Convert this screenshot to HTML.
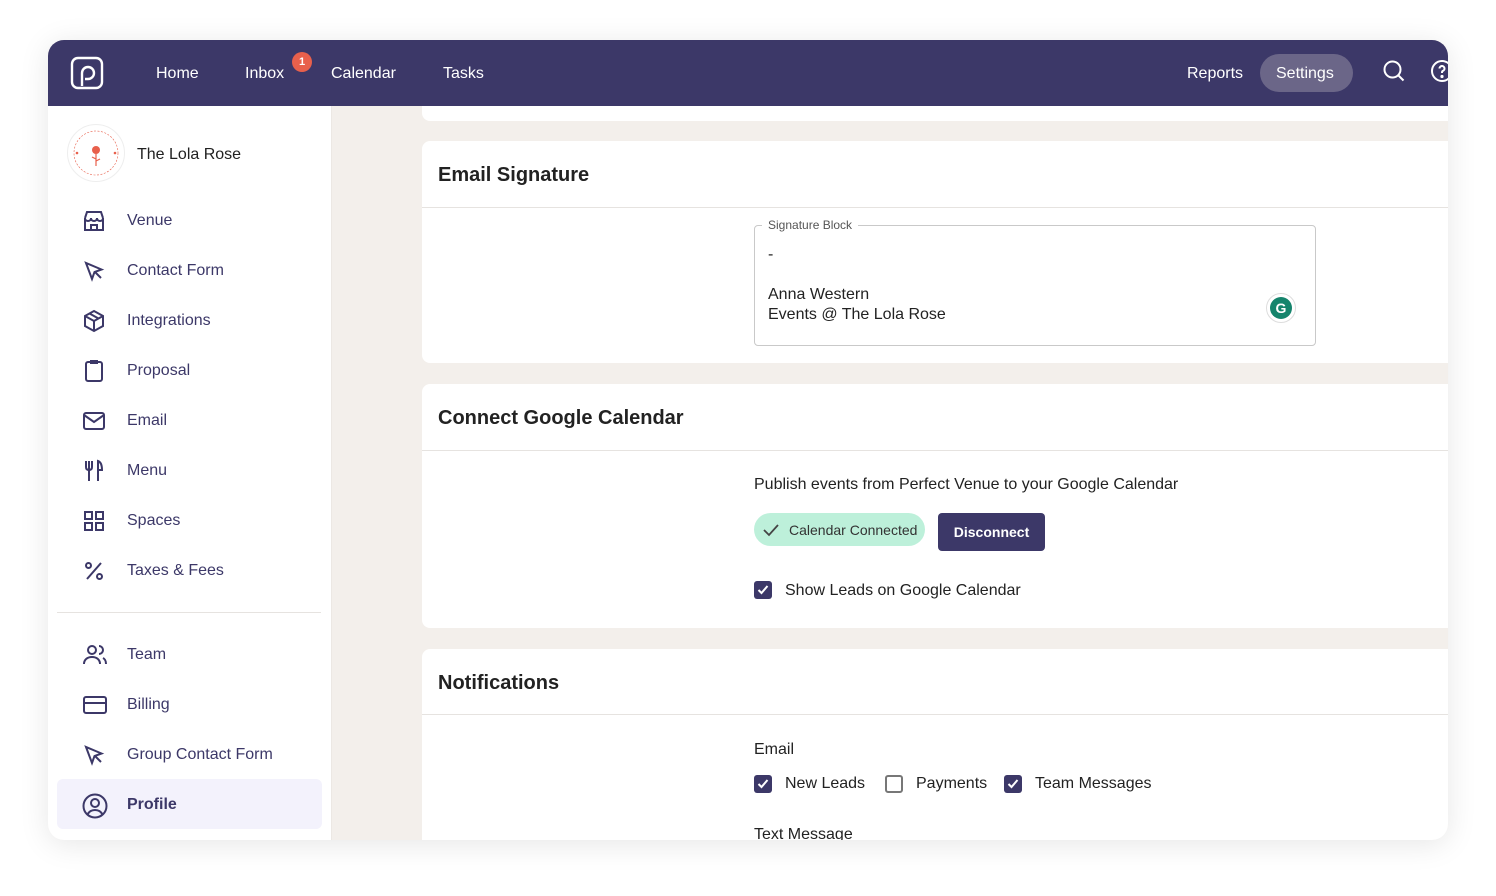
<!DOCTYPE html>
<html><head><meta charset="utf-8"><style>
*{margin:0;padding:0;box-sizing:border-box}
body{width:1496px;height:896px;background:#fff;font-family:"Liberation Sans",sans-serif;position:relative;overflow:hidden}
.frame{position:absolute;left:48px;top:40px;width:1400px;height:800px;border-radius:16px;overflow:hidden;background:#f3efeb;box-shadow:0 4px 30px rgba(0,0,0,.10)}
.nav{position:absolute;left:0;top:0;width:1400px;height:66px;background:#3c3868;color:#fff;font-size:16px;z-index:5}
.nav span{position:absolute;top:25px}
.side{position:absolute;left:0;top:66px;width:284px;height:734px;background:#fff;border-right:1px solid #ece8e4}
.item{position:absolute;left:0;width:284px;height:50px;color:#3c3868;font-size:16px}
.item svg{position:absolute;left:34px;top:14px}
.item span{position:absolute;left:79px;top:17px}
.card{position:absolute;left:374px;width:1100px;background:#fff;border-radius:8px}
.card h2{position:absolute;left:16px;top:23px;font-size:20px;color:#222;font-weight:bold}
.card .ln{position:absolute;left:0;right:0;height:1px;background:#e6e3e0}
.t{position:absolute;color:#222;font-size:16px}
.cb{position:absolute;width:18px;height:18px;border-radius:3px;background:#3c3868}
.cb.off{background:#fff;border:2px solid #777}
</style></head><body>
<div class="frame">
 <div class="nav">
  <svg style="position:absolute;left:22px;top:16px" width="34" height="34" viewBox="0 0 34 34" fill="none" stroke="#fff" stroke-width="2.4"><rect x="2" y="2" width="30" height="30" rx="6"/><path d="M12 30V17a6 6 0 1 1 6 6h-3"/></svg>
  <span style="left:108px">Home</span>
  <span style="left:197px">Inbox</span>
  <div style="position:absolute;left:244px;top:12px;width:20px;height:20px;border-radius:50%;background:#e8604c;font-size:11px;text-align:center;line-height:20px;font-weight:bold">1</div>
  <span style="left:283px">Calendar</span>
  <span style="left:395px">Tasks</span>
  <span style="left:1139px">Reports</span>
  <div style="position:absolute;left:1212px;top:14px;width:93px;height:38px;border-radius:19px;background:#6b6688"></div>
  <span style="left:1228px">Settings</span>
  <svg style="position:absolute;left:1334px;top:19px" width="24" height="24" viewBox="0 0 24 24" fill="none" stroke="#fff" stroke-width="2"><circle cx="10.5" cy="10.5" r="8"/><path d="M16.5 16.5l5 5"/></svg>
  <svg style="position:absolute;left:1382px;top:19px" width="24" height="24" viewBox="0 0 24 24" fill="none" stroke="#fff" stroke-width="2"><circle cx="12" cy="12" r="10"/><path d="M9.5 9.5a2.5 2.5 0 1 1 3.5 2.3c-.7.3-1 .9-1 1.7v.5"/><circle cx="12" cy="17.5" r=".6" fill="#fff"/></svg>
 </div>
 <div class="side">
  <div style="position:absolute;left:19px;top:18px;width:58px;height:58px;border-radius:50%;border:1px solid #eee;background:#fff"></div>
  <svg style="position:absolute;left:20px;top:19px" width="56" height="56" viewBox="0 0 56 56"><circle cx="28" cy="28" r="22" fill="none" stroke="#e8604c" stroke-width="0.6" stroke-dasharray="2 1.5"/><circle cx="28" cy="25" r="4" fill="#e8604c"/><path d="M28 29v12M28 34l-4-2M28 36l4-2" stroke="#e8604c" stroke-width="1.2"/><circle cx="9" cy="28" r="1.3" fill="#e8604c"/><circle cx="47" cy="28" r="1.3" fill="#e8604c"/></svg>
  <div style="position:absolute;left:89px;top:40px;font-size:16px;color:#222">The Lola Rose</div>

  <div class="item" style="top:89px"><svg width="24" height="24" viewBox="0 0 24 24" fill="none" stroke="#3c3868" stroke-width="2"><path d="M3 9l2-6h14l2 6M3 9v12h18V9M3 9c0 2 1.5 3 3 3s3-1 3-3c0 2 1.5 3 3 3s3-1 3-3c0 2 1.5 3 3 3s3-1 3-3M9 21v-5h6v5"/></svg><span>Venue</span></div>
  <div class="item" style="top:139px"><svg width="24" height="24" viewBox="0 0 24 24" fill="none" stroke="#3c3868" stroke-width="2"><path d="M4 4l6 16 2.5-7 7-2.5zM13 13l6 6"/></svg><span>Contact Form</span></div>
  <div class="item" style="top:189px"><svg width="24" height="24" viewBox="0 0 24 24" fill="none" stroke="#3c3868" stroke-width="2"><path d="M12 2l9 5v10l-9 5-9-5V7zM3 7l9 5 9-5M12 12v10M7.5 4.5l9 5"/></svg><span>Integrations</span></div>
  <div class="item" style="top:239px"><svg width="24" height="24" viewBox="0 0 24 24" fill="none" stroke="#3c3868" stroke-width="2"><rect x="4" y="3" width="16" height="19" rx="2"/><path d="M9 3V2h6v2H9z"/></svg><span>Proposal</span></div>
  <div class="item" style="top:289px"><svg width="24" height="24" viewBox="0 0 24 24" fill="none" stroke="#3c3868" stroke-width="2"><rect x="2" y="4" width="20" height="16" rx="2"/><path d="M2 6l10 7 10-7"/></svg><span>Email</span></div>
  <div class="item" style="top:339px"><svg width="24" height="24" viewBox="0 0 24 24" fill="none" stroke="#3c3868" stroke-width="2"><path d="M4 2v6c0 2 1 3 3 3s3-1 3-3V2M7 2v20M16 22V2c3 1 4 5 4 9h-4"/></svg><span>Menu</span></div>
  <div class="item" style="top:389px"><svg width="24" height="24" viewBox="0 0 24 24" fill="none" stroke="#3c3868" stroke-width="2"><rect x="3" y="3" width="7" height="7"/><rect x="14" y="3" width="7" height="7"/><rect x="3" y="14" width="7" height="7"/><rect x="14" y="14" width="7" height="7"/></svg><span>Spaces</span></div>
  <div class="item" style="top:439px"><svg width="24" height="24" viewBox="0 0 24 24" fill="none" stroke="#3c3868" stroke-width="2"><path d="M19 4L5 20"/><circle cx="6.5" cy="6.5" r="2.5"/><circle cx="17.5" cy="17.5" r="2.5"/></svg><span>Taxes &amp; Fees</span></div>
  <div style="position:absolute;left:9px;top:506px;width:264px;height:1px;background:#e6e3e0"></div>
  <div class="item" style="top:523px"><svg width="26" height="24" viewBox="0 0 26 24" fill="none" stroke="#3c3868" stroke-width="2"><circle cx="10" cy="7" r="4"/><path d="M2 21c0-4 3-7 8-7s8 3 8 7M17 3a4 4 0 0 1 0 8M21 15c2 1 3 3 3 6"/></svg><span>Team</span></div>
  <div class="item" style="top:573px"><svg width="26" height="24" viewBox="0 0 26 24" fill="none" stroke="#3c3868" stroke-width="2"><rect x="2" y="4" width="22" height="16" rx="2"/><path d="M2 10h22"/></svg><span>Billing</span></div>
  <div class="item" style="top:623px"><svg width="24" height="24" viewBox="0 0 24 24" fill="none" stroke="#3c3868" stroke-width="2"><path d="M4 4l6 16 2.5-7 7-2.5zM13 13l6 6"/></svg><span>Group Contact Form</span></div>
  <div style="position:absolute;left:9px;top:673px;width:265px;height:50px;border-radius:6px;background:#f3f2fc"></div>
  <div class="item" style="top:673px;font-weight:bold"><svg width="26" height="26" viewBox="0 0 26 26" fill="none" stroke="#3c3868" stroke-width="2"><circle cx="13" cy="13" r="11.5"/><circle cx="13" cy="10" r="4"/><path d="M5.5 21.5c1.5-3 4-4.5 7.5-4.5s6 1.5 7.5 4.5"/></svg><span>Profile</span></div>
 </div>

 <div class="card" style="top:40px;height:41px"></div>

 <div class="card" style="top:101px;height:222px">
  <h2>Email Signature</h2><div class="ln" style="top:66px"></div>
  <div style="position:absolute;left:332px;top:84px;width:562px;height:121px;border:1px solid #c9c9c9;border-radius:4px"></div>
  <div style="position:absolute;left:340px;top:77px;background:#fff;padding:0 6px;font-size:12px;color:#555">Signature Block</div>
  <div class="t" style="left:346px;top:105px">-</div>
  <div class="t" style="left:346px;top:144px;line-height:20px">Anna Western<br>Events @ The Lola Rose</div>
  <div style="position:absolute;left:844px;top:152px;width:30px;height:30px;border-radius:50%;border:1px solid #ddd;background:#fff"></div>
  <div style="position:absolute;left:848px;top:156px;width:22px;height:22px;border-radius:50%;background:#15846c;color:#fff;font-size:14px;text-align:center;line-height:22px;font-weight:bold">G</div>
 </div>

 <div class="card" style="top:344px;height:244px">
  <h2>Connect Google Calendar</h2><div class="ln" style="top:66px"></div>
  <div class="t" style="left:332px;top:92px">Publish events from Perfect Venue to your Google Calendar</div>
  <div style="position:absolute;left:332px;top:129px;width:171px;height:33px;border-radius:17px;background:#bdf0da"></div>
  <svg style="position:absolute;left:340px;top:137px" width="18" height="18" viewBox="0 0 18 18" fill="none" stroke="#444" stroke-width="1.8"><path d="M2 9l5 5L16 4"/></svg>
  <div style="position:absolute;left:367px;top:138px;font-size:14px;color:#333">Calendar Connected</div>
  <div style="position:absolute;left:516px;top:129px;width:107px;height:38px;border-radius:4px;background:#3c3868;color:#fff;font-size:14px;font-weight:bold;text-align:center;line-height:38px">Disconnect</div>
  <div class="cb" style="left:332px;top:197px"></div>
  <svg style="position:absolute;left:335px;top:200px" width="12" height="12" viewBox="0 0 12 12" fill="none" stroke="#fff" stroke-width="2"><path d="M1.5 6l3 3 6-7"/></svg>
  <div class="t" style="left:363px;top:198px">Show Leads on Google Calendar</div>
 </div>

 <div class="card" style="top:609px;height:260px">
  <h2>Notifications</h2><div class="ln" style="top:65px"></div>
  <div class="t" style="left:332px;top:92px">Email</div>
  <div class="cb" style="left:332px;top:126px"></div>
  <svg style="position:absolute;left:335px;top:129px" width="12" height="12" viewBox="0 0 12 12" fill="none" stroke="#fff" stroke-width="2"><path d="M1.5 6l3 3 6-7"/></svg>
  <div class="t" style="left:363px;top:126px">New Leads</div>
  <div class="cb off" style="left:463px;top:126px"></div>
  <div class="t" style="left:494px;top:126px">Payments</div>
  <div class="cb" style="left:582px;top:126px"></div>
  <svg style="position:absolute;left:585px;top:129px" width="12" height="12" viewBox="0 0 12 12" fill="none" stroke="#fff" stroke-width="2"><path d="M1.5 6l3 3 6-7"/></svg>
  <div class="t" style="left:613px;top:126px">Team Messages</div>
  <div class="t" style="left:332px;top:177px">Text Message</div>
 </div>
</div>
</body></html>
